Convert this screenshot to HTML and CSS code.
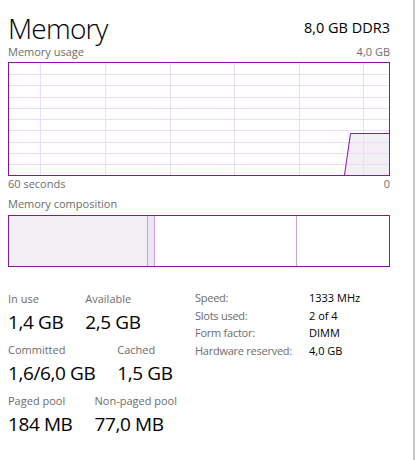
FILE: index.html
```html
<!DOCTYPE html>
<html>
<head>
<meta charset="utf-8">
<link rel="stylesheet" href="styles.css">
</head>
<body>
<div class="frame">
  <div class="page">
    <div class="header">
      <h1 class="title">Memory</h1>
      <div class="spec">8,0 GB DDR3</div>
    </div>
    <div class="caption-row">
      <span>Memory usage</span>
      <span>4,0 GB</span>
    </div>
    <div class="chart">
      <svg class="chart-svg" width="380" height="112" viewBox="0 0 380 112">
        <polygon class="usage-fill" points="335.5,112 341.5,70.5 380,70.5 380,112"/>
        <g class="grid">
          <line x1="31.5" y1="0" x2="31.5" y2="112"/>
          <line x1="96.5" y1="0" x2="96.5" y2="112"/>
          <line x1="161.5" y1="0" x2="161.5" y2="112"/>
          <line x1="225.5" y1="0" x2="225.5" y2="112"/>
          <line x1="290.5" y1="0" x2="290.5" y2="112"/>
          <line x1="354.5" y1="0" x2="354.5" y2="112"/>
          <line x1="0" y1="11.5" x2="380" y2="11.5"/>
          <line x1="0" y1="22.5" x2="380" y2="22.5"/>
          <line x1="0" y1="34.5" x2="380" y2="34.5"/>
          <line x1="0" y1="45.5" x2="380" y2="45.5"/>
          <line x1="0" y1="56.5" x2="380" y2="56.5"/>
          <line x1="0" y1="67.5" x2="380" y2="67.5"/>
          <line x1="0" y1="79.5" x2="380" y2="79.5"/>
          <line x1="0" y1="90.5" x2="380" y2="90.5"/>
          <line x1="0" y1="101.5" x2="380" y2="101.5"/>
        </g>
        <polyline class="usage-line" points="335.5,112 341.5,70.5 380,70.5"/>
      </svg>
    </div>
    <div class="caption-row axis">
      <span>60 seconds</span>
      <span>0</span>
    </div>
    <div class="comp-label">Memory composition</div>
    <div class="comp">
      <div class="seg inuse" style="width:139px"></div>
      <div class="seg modified" style="width:7px"></div>
      <div class="seg standby" style="width:142px"></div>
      <div class="seg free"></div>
    </div>
    <div class="stats">
      <div class="stats-left">
        <div class="stat-row">
          <div class="stat"><div class="lbl">In use</div><div class="val">1,4 GB</div></div>
          <div class="stat"><div class="lbl">Available</div><div class="val">2,5 GB</div></div>
        </div>
        <div class="stat-row">
          <div class="stat"><div class="lbl">Committed</div><div class="val">1,6/6,0 GB</div></div>
          <div class="stat"><div class="lbl">Cached</div><div class="val">1,5 GB</div></div>
        </div>
        <div class="stat-row">
          <div class="stat"><div class="lbl">Paged pool</div><div class="val">184 MB</div></div>
          <div class="stat"><div class="lbl">Non-paged pool</div><div class="val">77,0 MB</div></div>
        </div>
      </div>
      <div class="specs">
        <div class="k">Speed:</div><div class="v">1333 MHz</div>
        <div class="k">Slots used:</div><div class="v">2 of 4</div>
        <div class="k">Form factor:</div><div class="v">DIMM</div>
        <div class="k">Hardware reserved:</div><div class="v">4,0 GB</div>
      </div>
    </div>
  </div>
</div>
</body>
</html>
```
FILE: styles.css
```css
html, body {
  margin: 0;
  padding: 0;
  background: #ffffff;
}
body {
  font-family: "Open Sans", "Noto Sans", sans-serif;
  color: #000;
}
.frame {
  width: 413px;
  height: 460px;
  border-right: 2px solid #c8c8c8;
}
.page {
  width: 382px;
  margin-left: 8px;
}
.header {
  display: flex;
  justify-content: space-between;
  align-items: flex-start;
  padding-top: 13px;
  height: 33px;
}
.title {
  margin: 0;
  font-size: 28px;
  font-weight: 300;
  line-height: 30px;
  letter-spacing: -0.8px;
  color: #000;
}
.spec {
  margin-top: 5px;
  font-size: 14.5px;
  line-height: 20px;
}
.caption-row {
  display: flex;
  justify-content: space-between;
  font-size: 11px;
  line-height: 12px;
  color: #6d6d6d;
}
.chart {
  margin-top: 4px;
  border: 1px solid #8b12ae;
  height: 112px;
}
.chart-svg {
  display: block;
}
.grid line {
  stroke: #eddcf2;
  stroke-width: 1;
}
.usage-fill {
  fill: #f2eff4;
}
.usage-line {
  fill: none;
  stroke: #8b12ae;
  stroke-width: 1;
}
.caption-row.axis {
  margin-top: 1px;
  line-height: 14px;
}
.comp-label {
  margin-top: 6px;
  font-size: 11px;
  line-height: 14px;
  color: #6d6d6d;
}
.comp {
  margin-top: 4px;
  display: flex;
  border: 1px solid #8b12ae;
  height: 50px;
}
.seg {
  box-sizing: border-box;
  height: 100%;
  border-right: 1px solid #c9a0d8;
}
.seg.inuse { background: #f2eff4; }
.seg.modified { background: #efe4f2; }
.seg.standby { background: #fff; }
.seg.free { flex: 1; border-right: none; }
.stats {
  margin-top: 22px;
  display: flex;
  align-items: flex-start;
}
.stats-left {
  flex: 0 0 187px;
  padding-top: 3px;
}
.stat-row {
  display: flex;
  gap: 22px;
  margin-bottom: 9px;
}
.lbl {
  font-size: 11px;
  line-height: 14px;
  color: #6d6d6d;
}
.val {
  margin-top: 4px;
  font-size: 19px;
  line-height: 24px;
  letter-spacing: -0.4px;
}
.specs {
  display: grid;
  grid-template-columns: 114px auto;
  font-size: 11px;
  line-height: 17.7px;
}
.specs .k {
  color: #6d6d6d;
  letter-spacing: -0.25px;
}
.specs .v { color: #000; }
```
